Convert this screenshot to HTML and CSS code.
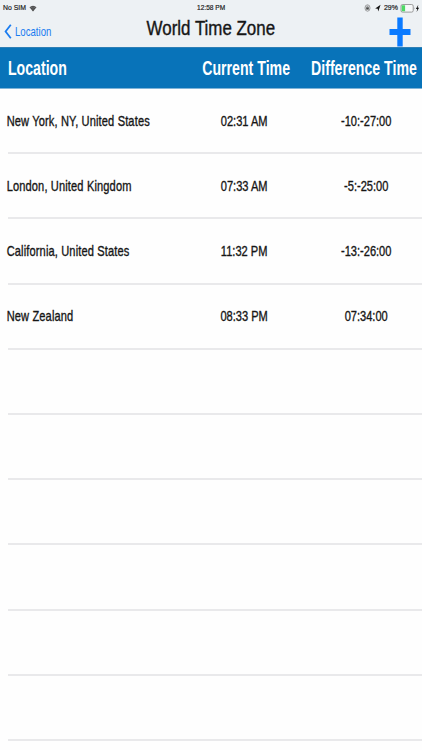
FILE: index.html
```html
<!DOCTYPE html>
<html lang="en">
<head>
  <meta charset="UTF-8">
  <title>World Time Zone</title>
  <meta name="viewport" content="width=device-width, initial-scale=1.0">
  <link rel="stylesheet" href="styles.css">
</head>
<body>
  <header class="top">
    <div class="status">
      <div class="status-left">
        <span class="carrier">No SIM</span>
        <svg class="wifi" width="8" height="7" viewBox="0 0 8 7">
          <path d="M0.5 2.3 Q4 -0.8 7.5 2.3 L4 6.6 Z" fill="#444"/>
          <path d="M1.2 3 Q4 0.9 6.8 3 M2.3 4.4 Q4 3.1 5.7 4.4" fill="none" stroke="#c4c8cb" stroke-width="0.3"/>
        </svg>
      </div>
      <span class="clock">12:58 PM</span>
      <div class="status-right">
        <svg width="7" height="8" viewBox="0 0 7 8">
          <ellipse cx="3.5" cy="4" rx="2.5" ry="3.2" fill="none" stroke="#777" stroke-width="0.7"/>
          <rect x="2.2" y="3.4" width="2.6" height="2.2" fill="#444"/>
          <path d="M2.8 3.6 V2.6 Q3.5 1.8 4.2 2.6 V3.6" fill="none" stroke="#444" stroke-width="0.6"/>
        </svg>
        <svg class="arrow" width="6" height="8" viewBox="0 0 6 8">
          <path d="M5.6 0.8 L0.2 4.4 L2.7 4.7 L3.2 7.4 Z" fill="#111"/>
        </svg>
        <span class="percent">29%</span>
        <svg class="battery" width="20" height="9" viewBox="0 0 20 9">
          <rect x="1" y="0.5" width="12.2" height="7.6" rx="1.5" fill="#f6f8f9" stroke="#777" stroke-width="0.7"/>
          <rect x="1.7" y="1.3" width="3.4" height="6" rx="0.5" fill="#4cd964"/>
          <path d="M13.9 3 Q14.9 4.4 13.9 5.8 Z" fill="#777"/>
          <path d="M18.3 0.8 L15.9 4.9 H17.3 L16.6 8 L19.1 3.8 H17.7 Z" fill="#111"/>
        </svg>
      </div>
    </div>
    <div class="nav">
      <a class="back">
        <svg width="8" height="15" viewBox="0 0 8 15">
          <path d="M6.8 0.8 L1.6 7.5 L6.8 14.2" fill="none" stroke="#1a7cf0" stroke-width="1.8"/>
        </svg>
        <span class="back-text">Location</span>
      </a>
      <h1 class="title">World Time Zone</h1>
      <a class="add">
        <svg width="22" height="30" viewBox="0 0 22 30">
          <path d="M8.3 0.5 H13.7 V12 H21.5 V18 H13.7 V29.5 H8.3 V18 H0.5 V12 H8.3 Z" fill="#0a7aff"/>
        </svg>
      </a>
    </div>
  </header>

  <div class="table-head">
    <div class="head-cells">
      <span>Location</span>
      <span>Current Time</span>
      <span>Difference Time</span>
    </div>
  </div>

  <main class="zones">
    <div class="row">
      <div class="cells"><span>New York, NY, United States</span><span>02:31 AM</span><span>-10:-27:00</span></div>
    </div>
    <div class="row">
      <div class="cells"><span>London, United Kingdom</span><span>07:33 AM</span><span>-5:-25:00</span></div>
    </div>
    <div class="row">
      <div class="cells"><span>California, United States</span><span>11:32 PM</span><span>-13:-26:00</span></div>
    </div>
    <div class="row">
      <div class="cells"><span>New Zealand</span><span>08:33 PM</span><span>07:34:00</span></div>
    </div>
    <div class="row"></div>
    <div class="row"></div>
    <div class="row"></div>
    <div class="row"></div>
    <div class="row"></div>
    <div class="row"></div>
  </main>
</body>
</html>
```

FILE: styles.css
```css
* {
  box-sizing: border-box;
}
body {
  margin: 0;
  height: 750px;
  overflow: hidden;
  background: #fefefe;
  color: #161616;
  font-family: "Liberation Sans", Arial, sans-serif;
}

/* Status bar and navigation */
.top {
  height: 47px;
  background: #edf1f4;
}
.status {
  height: 16px;
  padding: 0 2px 0 3px;
  display: grid;
  grid-template-columns: 1fr auto 1fr;
  align-items: center;
  font-size: 8px;
  line-height: 16px;
  -webkit-text-stroke: 0.2px #222;
}
.status-left, .status-right {
  display: flex;
  align-items: center;
}
.status-right {
  justify-content: flex-end;
}
.carrier {
  width: 26px;
  white-space: nowrap;
  transform: scaleX(0.86);
  transform-origin: left;
}
.clock {
  transform: scaleX(0.82);
}
.arrow {
  margin: 0 3px 0 4px;
}
.percent {
  width: 15px;
  transform: scaleX(0.87);
  transform-origin: left;
}
.battery {
  margin-left: 1px;
}
.nav {
  height: 31px;
  padding: 0 11px 0 4px;
  display: grid;
  grid-template-columns: 86px 1fr 80px;
  align-items: center;
}
.back {
  display: flex;
  align-items: center;
  gap: 3px;
  color: #1a7cf0;
}
.back-text {
  font-size: 13px;
  transform: scaleX(0.74);
  transform-origin: left;
}
.title {
  margin: 0 0 7px 0;
  justify-self: center;
  white-space: nowrap;
  font-size: 20.5px;
  font-weight: 400;
  line-height: 24px;
  -webkit-text-stroke: 0.4px #161616;
  transform: scaleX(0.825);
}
.add {
  justify-self: end;
  height: 30px;
}

/* Column titles */
.table-head {
  height: 42px;
  background: #0873b9;
  border-top: 1px solid #2f7fb5;
  border-bottom: 1px solid #7fb4d8;
}
.head-cells, .cells {
  display: grid;
  align-items: center;
  height: 100%;
  white-space: nowrap;
  text-align: center;
  transform-origin: left;
}
.head-cells {
  width: 582px;
  grid-template-columns: 257px 165px 160px;
  color: #fff;
  font-size: 19.5px;
  font-weight: 700;
  transform: scaleX(0.725);
}
.head-cells span:first-child {
  padding-left: 11px;
  text-align: left;
}

/* Time zone list */
.row {
  height: 65.2px;
  position: relative;
}
.row::after {
  content: "";
  position: absolute;
  left: 8px;
  right: 0;
  bottom: 0;
  height: 2px;
  background: #e9e9eb;
}
.cells {
  width: 541px;
  padding-bottom: 2px;
  grid-template-columns: 241px 144px 156px;
  font-size: 14.2px;
  -webkit-text-stroke: 0.35px #161616;
  transform: scaleX(0.78);
}
.cells span:first-child {
  padding-left: 8.5px;
  letter-spacing: 0.18px;
  text-align: left;
}
.cells span:last-child {
  padding-left: 13px;
}
```
